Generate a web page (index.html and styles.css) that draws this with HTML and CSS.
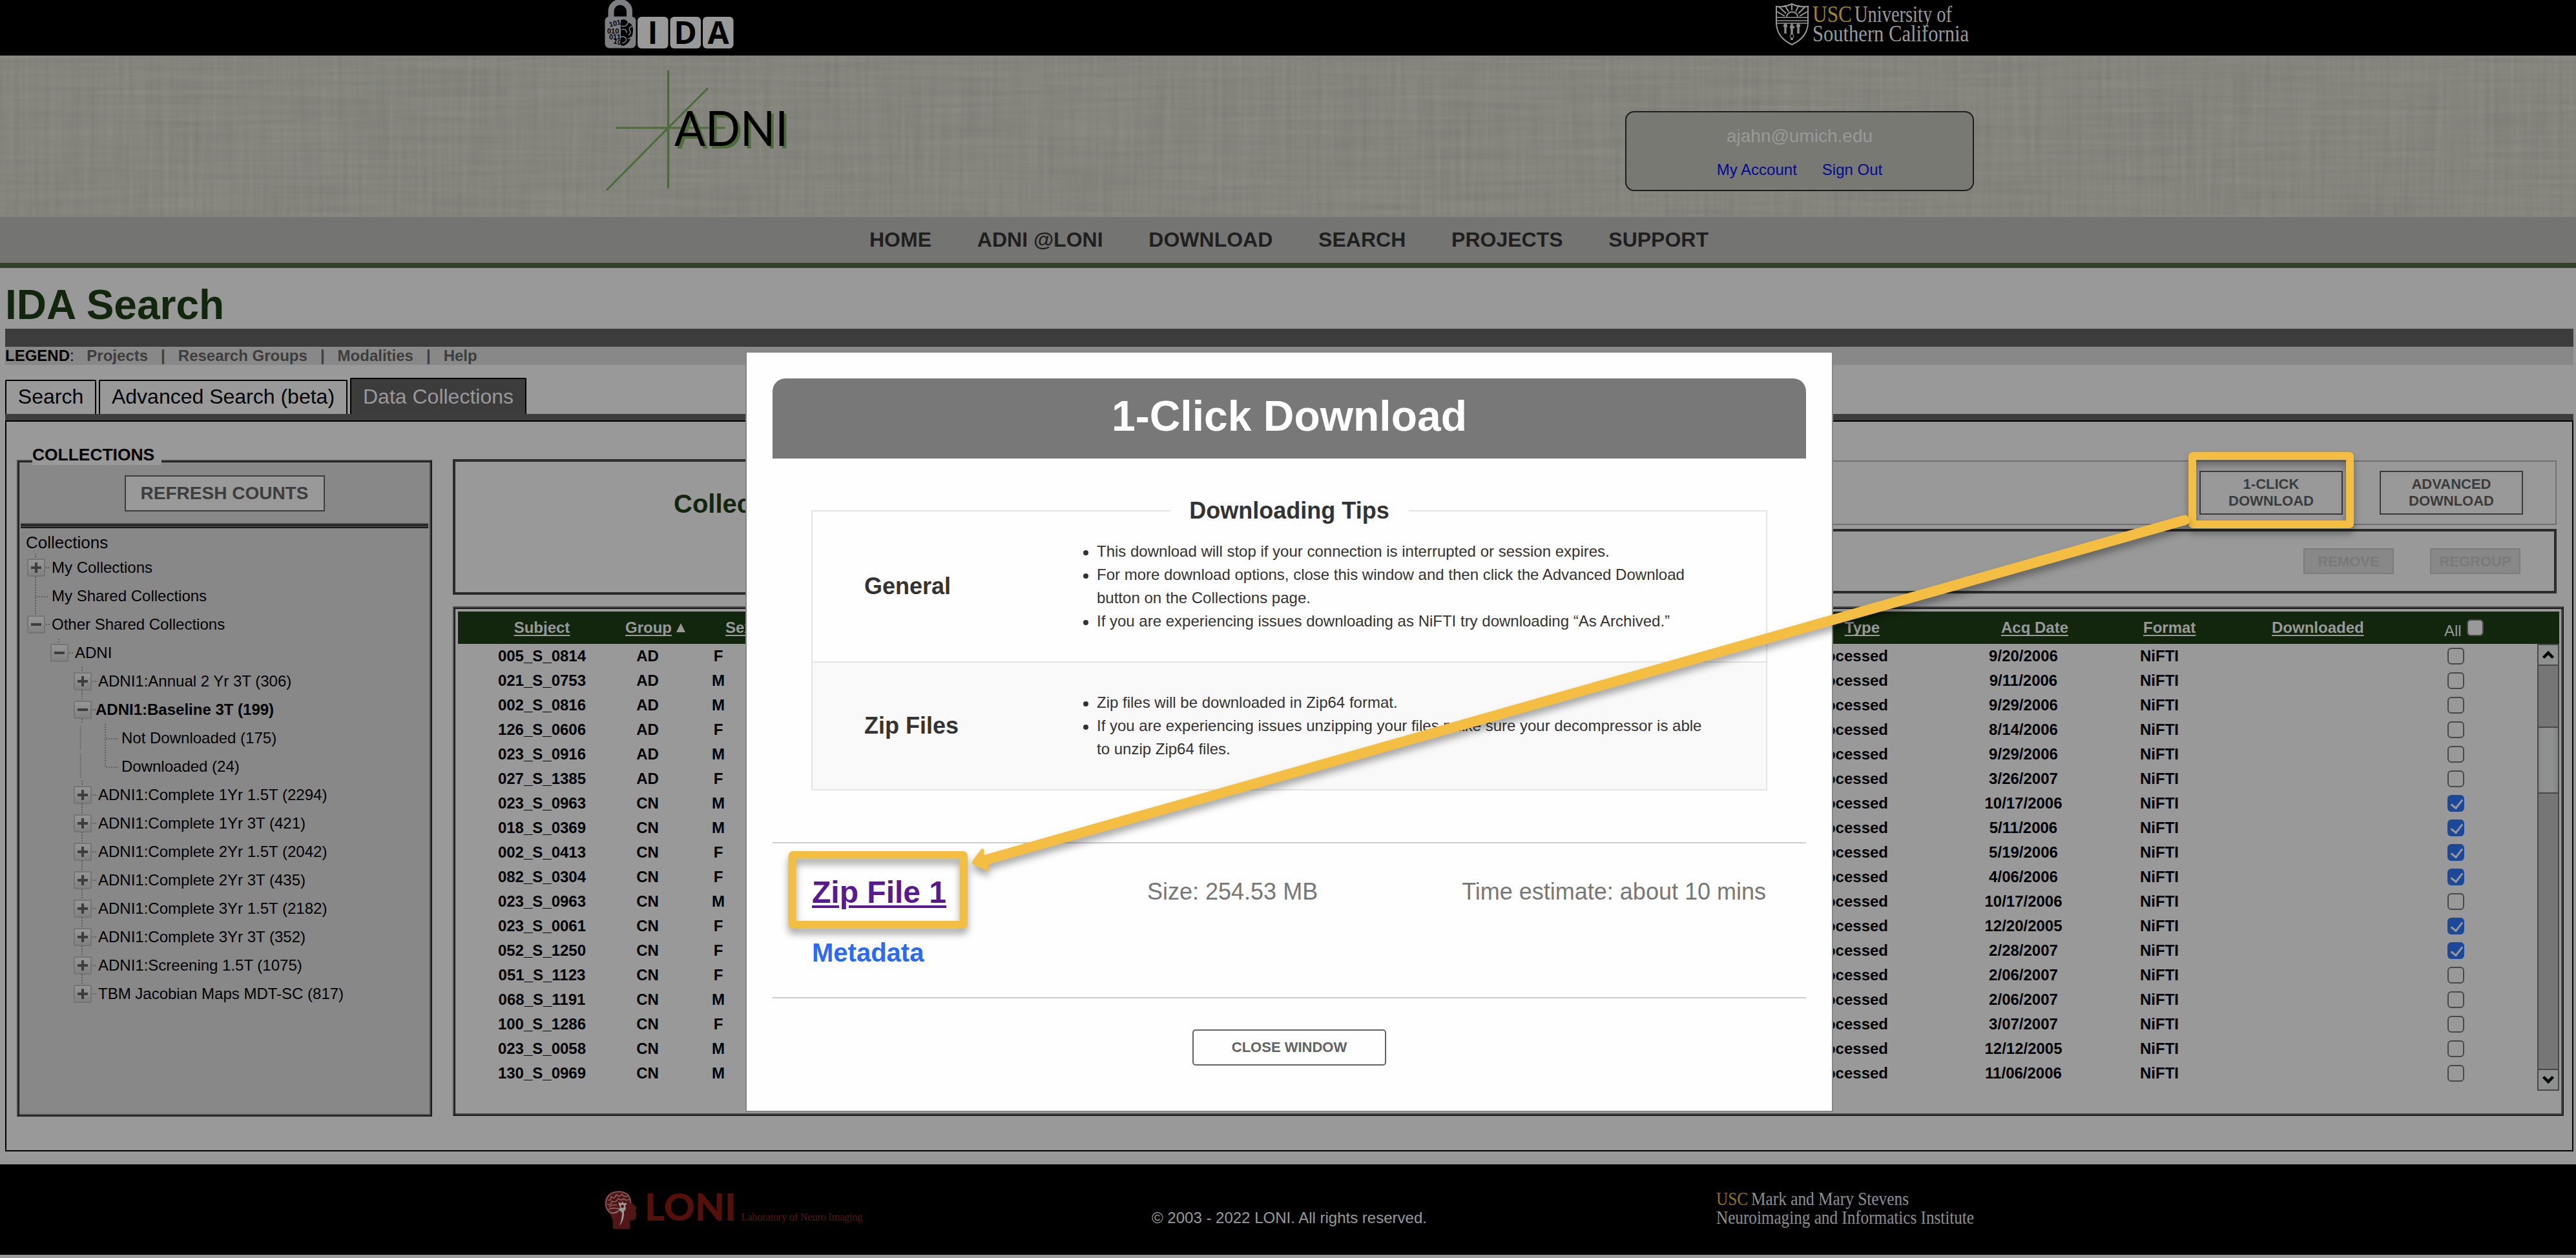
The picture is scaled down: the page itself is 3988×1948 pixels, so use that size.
FILE: index.html
```html
<!DOCTYPE html>
<html lang="en">
<head>
<meta charset="utf-8">
<title>IDA Search</title>
<link rel="stylesheet" href="styles.css">
</head>
<body>
<svg class="defs" width="0" height="0">
  <defs>
    <linearGradient id="nodeFill" x1="0" y1="0" x2="0" y2="1"><stop offset="0" stop-color="#979797"/><stop offset="1" stop-color="#808080"/></linearGradient>
    <filter id="warp" x="0" y="0" width="100%" height="100%" color-interpolation-filters="sRGB">
      <feTurbulence type="fractalNoise" baseFrequency="0.13 0.005" numOctaves="2" seed="4"/>
      <feColorMatrix values="0 0 0 0 0  0 0 0 0 0  0 0 0 0 0  .09 0 0 0 -.02"/>
    </filter>
    <filter id="weft" x="0" y="0" width="100%" height="100%" color-interpolation-filters="sRGB">
      <feTurbulence type="fractalNoise" baseFrequency="0.005 0.13" numOctaves="2" seed="9"/>
      <feColorMatrix values="0 0 0 0 0  0 0 0 0 0  0 0 0 0 0  .09 0 0 0 -.02"/>
    </filter>
    <symbol id="box" viewBox="0 0 42 44">
      <path d="M33 22h6" stroke="#5f5f5f" stroke-width="2" stroke-dasharray="2 2"/>
      <rect x="5" y="9" width="26" height="26" rx="2" fill="url(#nodeFill)" stroke="#747474" stroke-width="2"/>
    </symbol>
    <symbol id="up" viewBox="0 0 42 44"><path d="M17 0v9" stroke="#5f5f5f" stroke-width="2" stroke-dasharray="2 2"/></symbol>
    <symbol id="down" viewBox="0 0 42 44"><path d="M17 36v8" stroke="#5f5f5f" stroke-width="2" stroke-dasharray="2 2"/></symbol>
    <symbol id="plus" viewBox="0 0 42 44"><use href="#box"/><path d="M10 22h16M18 14v16" stroke="#3d3d3d" stroke-width="4"/></symbol>
    <symbol id="minus" viewBox="0 0 42 44"><use href="#box"/><path d="M10 22h16" stroke="#3d3d3d" stroke-width="4"/></symbol>
    <symbol id="line" viewBox="0 0 42 44"><path d="M17 0v44" stroke="#5f5f5f" stroke-width="2" stroke-dasharray="2 2"/></symbol>
    <symbol id="tee" viewBox="0 0 42 44"><use href="#line"/><path d="M18 23h20" stroke="#5f5f5f" stroke-width="2" stroke-dasharray="2 2"/></symbol>
    <symbol id="ell" viewBox="0 0 42 44"><path d="M17 0v23h21" fill="none" stroke="#5f5f5f" stroke-width="2" stroke-dasharray="2 2"/></symbol>
  </defs>
</svg>

<header class="top">
  <svg class="ida" width="202" height="78" viewBox="936 0 202 78">
    <path d="M946 28V18a14 14 0 0 1 28.500-1v8" fill="none" stroke="#7d7f83" stroke-width="9" stroke-linecap="butt"/>
    <circle cx="974.500" cy="24" r="4.500" fill="#7d7f83"/>
    <rect x="936.500" y="25.500" width="48" height="49" rx="7" fill="#7d7f83"/>
    <g font-family="Liberation Sans" font-weight="bold" font-size="11" fill="#000">
      <text x="944" y="42" transform="rotate(-14 944 42)">101</text>
      <text x="940" y="52">010</text>
      <text x="943" y="61">011</text>
      <text x="949" y="67" transform="rotate(14 949 67)">10</text>
    </g>
    <path d="M961 31c5-2 10 0 11 4 6 1 8 6 8 11s-1 10-4 13c-1 6-6 10-11 12-3 0-5-2-4-5z" fill="#000"/>
    <path d="M962 40c4 2 9 0 10-5M962 46c5-2 8 0 8 5M979 41c-4 0-6 3-4 6s1 6-2 7M961 57c5-1 10 1 8 6-1 3-4 4-6 3M972 60c3 0 4-1 5-3" fill="none" stroke="#7d7f83" stroke-width="1.500"/>
    <rect x="987" y="26" width="47.500" height="49" rx="6" fill="#999"/>
    <rect x="1037.500" y="26" width="47.500" height="49" rx="6" fill="#999"/>
    <rect x="1088" y="26" width="47.500" height="49" rx="6" fill="#999"/>
    <g font-family="Open Sans" font-weight="bold" font-size="48" fill="#000" text-anchor="middle">
      <text x="1010.500" y="68">I</text><text x="1061" y="68">D</text><text x="1112" y="68">A</text>
    </g>
  </svg>
  <svg class="usc" width="302" height="76" viewBox="2748 0 302 76">
    <path d="M2750 10q12 2 24-4q12 6 25 4v24q0 24-25 35q-24-11-24-35z" fill="#000" stroke="#969696" stroke-width="2"/>
    <path d="M2750 27h48M2750 32h48M2750 36h49" stroke="#969696" stroke-width="1.500"/>
    <path d="M2766 26a8 7 0 0 1 17 0M2763 25l-12-7M2765 21l-11-11M2769 18l-6-10M2774 16v-9M2780 18l5-10M2784 21l11-11M2786 25l12-7" fill="none" stroke="#969696" stroke-width="2"/>
    <path d="M2764 36v16M2774 36v26M2784 36v16M2761 40h6M2771 42h7M2781 40h6" stroke="#8a8a8a" stroke-width="3.500"/>
    <circle cx="2774" cy="56" r="3" fill="#000" stroke="#969696"/>
    <g font-family="Liberation Serif" font-size="35" fill="#999">
      <text x="2806" y="33.500" fill="#9c8430" textLength="61" lengthAdjust="spacingAndGlyphs">USC</text>
      <text x="2871" y="33.500" textLength="151" lengthAdjust="spacingAndGlyphs">University of</text>
      <text x="2806" y="64" textLength="242" lengthAdjust="spacingAndGlyphs">Southern California</text>
    </g>
  </svg>
</header>

<section class="banner">
  <svg class="weave" width="3988" height="250"><rect width="3988" height="250" filter="url(#warp)"/><rect width="3988" height="250" filter="url(#weft)"/></svg>
  <svg class="adni" width="300" height="200" viewBox="930 102 300 200">
    <path d="M1034.500 109v183" fill="none" stroke="#4a6d38" stroke-width="3.500"/>
    <path d="M953 198h170M939 294.500L1034.500 198L1096 136.500" fill="none" stroke="#4a6d38" stroke-width="3"/>
    <g font-family="Lato" font-size="76">
      <text x="1048" y="229.500" fill="#4d6d3c" textLength="176" lengthAdjust="spacingAndGlyphs">ADNI</text>
      <text x="1044" y="225.500" fill="#000" textLength="176" lengthAdjust="spacingAndGlyphs">ADNI</text>
    </g>
  </svg>
  <div class="account">
    <div class="email">ajahn@umich.edu</div>
    <div class="account-links"><a>My Account</a><a>Sign Out</a></div>
  </div>
</section>

<nav class="nav"><a>HOME</a><a>ADNI @LONI</a><a>DOWNLOAD</a><a>SEARCH</a><a>PROJECTS</a><a>SUPPORT</a></nav>

<main class="main">
  <h1>IDA Search</h1>
  <div class="bar"></div>
  <div class="legend"><b>LEGEND</b>: <span class="lg first">Projects</span><span class="lg">|</span><span class="lg">Research Groups</span><span class="lg">|</span><span class="lg">Modalities</span><span class="lg">|</span><span class="lg">Help</span></div>
  <div class="tabs"><div class="tab t1">Search</div><div class="tab t2">Advanced Search (beta)</div><div class="tab t3 active">Data Collections</div></div>
  <div class="tabbar"></div>
  <div class="panel">
    <aside class="collections">
      <div class="coll-label">COLLECTIONS</div>
      <div class="refresh">REFRESH COUNTS</div>
      <div class="rule"></div>
      <div class="tree">
        <div class="root">Collections</div>
        <div class="node l1"><svg><use href="#up"/><use href="#plus"/><use href="#down"/></svg>My Collections</div>
        <div class="node l1"><svg><use href="#tee"/></svg>My Shared Collections</div>
        <div class="node l1"><svg><use href="#up"/><use href="#minus"/></svg>Other Shared Collections</div>
        <div class="node l2"><svg><use href="#up"/><use href="#minus"/></svg>ADNI</div>
        <div class="node l3"><svg><use href="#up"/><use href="#plus"/><use href="#down"/></svg>ADNI1:Annual 2 Yr 3T (306)</div>
        <div class="node l3 sel"><svg><use href="#up"/><use href="#minus"/><use href="#down"/></svg>ADNI1:Baseline 3T (199)</div>
        <div class="node l3"><svg class="thru"><use href="#line"/></svg><svg><use href="#tee"/></svg>Not Downloaded (175)</div>
        <div class="node l3"><svg class="thru"><use href="#line"/></svg><svg><use href="#ell"/></svg>Downloaded (24)</div>
        <div class="node l3"><svg><use href="#up"/><use href="#plus"/><use href="#down"/></svg>ADNI1:Complete 1Yr 1.5T (2294)</div>
        <div class="node l3"><svg><use href="#up"/><use href="#plus"/><use href="#down"/></svg>ADNI1:Complete 1Yr 3T (421)</div>
        <div class="node l3"><svg><use href="#up"/><use href="#plus"/><use href="#down"/></svg>ADNI1:Complete 2Yr 1.5T (2042)</div>
        <div class="node l3"><svg><use href="#up"/><use href="#plus"/><use href="#down"/></svg>ADNI1:Complete 2Yr 3T (435)</div>
        <div class="node l3"><svg><use href="#up"/><use href="#plus"/><use href="#down"/></svg>ADNI1:Complete 3Yr 1.5T (2182)</div>
        <div class="node l3"><svg><use href="#up"/><use href="#plus"/><use href="#down"/></svg>ADNI1:Complete 3Yr 3T (352)</div>
        <div class="node l3"><svg><use href="#up"/><use href="#plus"/><use href="#down"/></svg>ADNI1:Screening 1.5T (1075)</div>
        <div class="node l3"><svg><use href="#up"/><use href="#plus"/></svg>TBM Jacobian Maps MDT-SC (817)</div>
      </div>
    </aside>
    <section class="content">
      <div class="heads">
        <div class="title-box"><h2>Collection</h2></div>
        <div class="tools">
          <div class="downloads"><div class="btn">1-CLICK<br>DOWNLOAD</div><div class="btn">ADVANCED<br>DOWNLOAD</div></div>
          <div class="groups"><div class="btn off">REMOVE</div><div class="btn off">REGROUP</div></div>
        </div>
      </div>
      <div class="results">
        <div class="row hd"><u>Subject</u><div class="group-hd"><u>Group</u><svg width="14" height="14" viewBox="0 0 14 14"><path d="M7 0l7 14H0z" fill="#999"/></svg></div><u>Sex</u><u>Type</u><u>Acq Date</u><u>Format</u><u>Downloaded</u><div class="all"><span>All</span><i class="cb fill"></i></div></div>
        <div class="body">
          <div class="rows">
            <div class="row"><b>005_S_0814</b><b>AD</b><b>F</b><b>Processed</b><b>9/20/2006</b><b>NiFTI</b><b></b><i class="cb"></i></div>
            <div class="row"><b>021_S_0753</b><b>AD</b><b>M</b><b>Processed</b><b>9/11/2006</b><b>NiFTI</b><b></b><i class="cb"></i></div>
            <div class="row"><b>002_S_0816</b><b>AD</b><b>M</b><b>Processed</b><b>9/29/2006</b><b>NiFTI</b><b></b><i class="cb"></i></div>
            <div class="row"><b>126_S_0606</b><b>AD</b><b>F</b><b>Processed</b><b>8/14/2006</b><b>NiFTI</b><b></b><i class="cb"></i></div>
            <div class="row"><b>023_S_0916</b><b>AD</b><b>M</b><b>Processed</b><b>9/29/2006</b><b>NiFTI</b><b></b><i class="cb"></i></div>
            <div class="row"><b>027_S_1385</b><b>AD</b><b>F</b><b>Processed</b><b>3/26/2007</b><b>NiFTI</b><b></b><i class="cb"></i></div>
            <div class="row"><b>023_S_0963</b><b>CN</b><b>M</b><b>Processed</b><b>10/17/2006</b><b>NiFTI</b><b></b><i class="cb on"></i></div>
            <div class="row"><b>018_S_0369</b><b>CN</b><b>M</b><b>Processed</b><b>5/11/2006</b><b>NiFTI</b><b></b><i class="cb on"></i></div>
            <div class="row"><b>002_S_0413</b><b>CN</b><b>F</b><b>Processed</b><b>5/19/2006</b><b>NiFTI</b><b></b><i class="cb on"></i></div>
            <div class="row"><b>082_S_0304</b><b>CN</b><b>F</b><b>Processed</b><b>4/06/2006</b><b>NiFTI</b><b></b><i class="cb on"></i></div>
            <div class="row"><b>023_S_0963</b><b>CN</b><b>M</b><b>Processed</b><b>10/17/2006</b><b>NiFTI</b><b></b><i class="cb"></i></div>
            <div class="row"><b>023_S_0061</b><b>CN</b><b>F</b><b>Processed</b><b>12/20/2005</b><b>NiFTI</b><b></b><i class="cb on"></i></div>
            <div class="row"><b>052_S_1250</b><b>CN</b><b>F</b><b>Processed</b><b>2/28/2007</b><b>NiFTI</b><b></b><i class="cb on"></i></div>
            <div class="row"><b>051_S_1123</b><b>CN</b><b>F</b><b>Processed</b><b>2/06/2007</b><b>NiFTI</b><b></b><i class="cb"></i></div>
            <div class="row"><b>068_S_1191</b><b>CN</b><b>M</b><b>Processed</b><b>2/06/2007</b><b>NiFTI</b><b></b><i class="cb"></i></div>
            <div class="row"><b>100_S_1286</b><b>CN</b><b>F</b><b>Processed</b><b>3/07/2007</b><b>NiFTI</b><b></b><i class="cb"></i></div>
            <div class="row"><b>023_S_0058</b><b>CN</b><b>M</b><b>Processed</b><b>12/12/2005</b><b>NiFTI</b><b></b><i class="cb"></i></div>
            <div class="row"><b>130_S_0969</b><b>CN</b><b>M</b><b>Processed</b><b>11/06/2006</b><b>NiFTI</b><b></b><i class="cb"></i></div>
          </div>
          <div class="scroll">
            <div class="arrow"><svg width="20" height="14" viewBox="0 0 20 14"><path d="M2.500 11.500L10 4l7.500 7.500" fill="none" stroke="#000" stroke-width="4.500"/></svg></div>
            <div class="gap-top"></div>
            <div class="thumb"></div>
            <div class="gap-bottom"></div>
            <div class="arrow"><svg width="20" height="14" viewBox="0 0 20 14"><path d="M2.500 2.500L10 10l7.500-7.500" fill="none" stroke="#000" stroke-width="4.500"/></svg></div>
          </div>
        </div>
      </div>
    </section>
  </div>
</main>

<footer class="footer">
  <svg class="loni" width="404" height="64" viewBox="934 1842 404 64">
    <path d="M949 1903v-10q-1-10-9-18q-6-9-3-19q5-12 22-12q16 1 18 15l1 4l8 7l-2 3l1 8l-1 6q-2 3-9 3v13z" fill="#531616"/>
    <path d="M938 1868q-1-18 14-22q20-3 24 12v5M938 1868q3 10 12 11q8-1 9-7" fill="none" stroke="#8b7a7a" stroke-width="1.200"/>
    <path d="M941 1858q5 2 5-5q5 5 8-3q5 5 9-1q2 5 9 3M940 1865q8 1 7-5q7 3 10-4q5 4 9 0q2 4 9 1M942 1873q5-3 11-2l6 1M943 1869q3-4 12-3M945 1877q4 3 12-2" fill="none" stroke="#8b7070" stroke-width="1.300"/>
    <path d="M957 1862l5 1l2-3l1 3l6 0l-3 4l1 5l-3 4q1 13-7 22q4-10 4-20l-5-5l2-3z" fill="#999"/>
    <circle cx="963.500" cy="1868" r="2.500" fill="#531616"/>
    <text x="998" y="1890" font-family="Lato" font-weight="900" font-size="57" fill="#570f09" textLength="142" lengthAdjust="spacingAndGlyphs">LONI</text>
    <text x="1147.500" y="1890" font-family="Liberation Serif" font-size="16.500" fill="#531515" textLength="188">Laboratory of Neuro Imaging</text>
  </svg>
  <div class="copy">© 2003 - 2022 LONI. All rights reserved.</div>
  <svg class="ini" width="402" height="60" viewBox="2656 1842 402 60" font-family="Liberation Serif" font-size="30" fill="#8e8e8e">
    <text x="2657" y="1866" fill="#917418" textLength="49" lengthAdjust="spacingAndGlyphs">USC</text>
    <text x="2711" y="1866" textLength="244" lengthAdjust="spacingAndGlyphs">Mark and Mary Stevens</text>
    <text x="2657" y="1894.500" textLength="399" lengthAdjust="spacingAndGlyphs">Neuroimaging and Informatics Institute</text>
  </svg>
</footer>

<div class="modal">
  <div class="modal-title">1-Click Download</div>
  <div class="tips">
    <div class="tips-label">Downloading Tips</div>
    <div class="tip r1"><h3>General</h3><ul><li>This download will stop if your connection is interrupted or session expires.</li><li>For more download options, close this window and then click the Advanced Download button on the Collections page.</li><li>If you are experiencing issues downloading as NiFTI try downloading “As Archived.”</li></ul></div>
    <div class="tip r2"><h3>Zip Files</h3><ul><li>Zip files will be downloaded in Zip64 format.</li><li>If you are experiencing issues unzipping your files make sure your decompressor is able to unzip Zip64 files.</li></ul></div>
  </div>
  <div class="files">
    <div class="file"><a class="zip">Zip File 1</a><span>Size: 254.53 MB</span><span class="time">Time estimate: about 10 mins</span></div>
    <a class="meta">Metadata</a>
  </div>
  <div class="close">CLOSE WINDOW</div>
</div>

<svg class="notes" width="3988" height="1948" viewBox="0 0 3988 1948">
  <g fill="none" stroke="#f3be42" stroke-width="12" stroke-linejoin="round">
    <rect x="3394" y="706" width="244" height="106" rx="1"/>
    <rect x="1226.500" y="1324" width="265.500" height="108" rx="1"/>
  </g>
  <g>
    <path d="M3382 805.500L1524 1332" stroke="#f3be42" stroke-width="15.800" stroke-linecap="round"/>
    <path d="M1505 1337.500Q1504 1334 1507 1331L1519 1315Q1523 1312 1523 1317L1524 1324L1531 1338L1530.500 1345Q1531 1351 1527 1348L1508 1339.500Z" fill="#f3be42"/>
  </g>
</svg>
</body>
</html>
```
FILE: styles.css
```css
* { box-sizing: border-box; }
body { margin: 0; width: 3988px; height: 1948px; overflow: hidden; position: relative; background: #999; color: #000; font: 24px "Liberation Sans", Arial, sans-serif; }
h1, h2, h3, ul { margin: 0; padding: 0; }
svg { display: block; flex: none; overflow: visible; }
.defs { position: absolute; }

.top { height: 86px; background: #000; display: flex; padding-left: 936px; gap: 1610px; }
.banner { position: relative; height: 250px; display: flex; padding-left: 930px; gap: 1286px; background: #8b8b84; }
.weave { position: absolute; left: 0; top: 0; overflow: hidden; }
.adni { position: relative; margin-top: 16px; }
.account { position: relative; width: 540px; height: 124px; margin-top: 86px; padding-top: 19px; border: 2px solid #1e1e1e; border-radius: 14px; background: #787973; text-align: center; }
.email { font-size: 28px; line-height: 36px; color: #999; }
.account-links { display: flex; justify-content: center; gap: 39px; margin-top: 19px; line-height: 30px; color: #000999; }

.nav { height: 79px; display: flex; gap: 70.800px; padding-left: 1346px; border-bottom: 8px solid #33412a; background: #747473; color: #1f1f1f; font-size: 32px; font-weight: bold; line-height: 70px; white-space: nowrap; }

.main { margin-left: 8px; width: 3976px; }
h1 { height: 94px; padding-top: 21px; font-size: 64px; line-height: 72px; color: #11260d; }
.bar { height: 28px; background: #3c3c3c; }
.legend { height: 28px; line-height: 28px; background: #888; display: flex; white-space: pre; }
.lg { font-weight: bold; color: #3d3d3d; margin-right: 20px; }
.lg.first { margin-left: 13px; }
.tabs { height: 76px; display: flex; align-items: flex-end; gap: 4px; font-size: 32px; }
.tab { height: 53px; line-height: 48px; border: 2px solid #000; border-bottom: 0; text-align: center; border-radius: 2px 2px 0 0; }
.t1 { width: 141px; }
.t2 { width: 385px; }
.t3 { width: 273px; }
.tab.active { height: 56px; padding-top: 3px; background: #3c3c3c; color: #999; }
.tabbar { height: 10px; background: #3d3d3d; }
.panel { height: 1132px; border: 2px solid #000; padding: 58px 0 0 16px; display: flex; gap: 32px; }

.collections { width: 643px; height: 1017px; margin-top: 1px; background: #888; border: 2px solid; border-color: #4c4c4c #1c1c1c #1c1c1c #4c4c4c; box-shadow: inset 2px 2px 0 #1c1c1c, inset -2px -2px 0 #4c4c4c; padding: 0 4px; }
.coll-label { width: 200px; height: 30px; margin: -24px 0 0 18px; background: #999; font-size: 26.400px; font-weight: bold; line-height: 28px; }
.refresh { width: 310px; height: 56px; margin: 16px auto 0; border: 2px solid #3d3d3d; background: #999; color: #3d3d3d; font-size: 28px; font-weight: bold; line-height: 52px; text-align: center; }
.rule { height: 8px; margin-top: 18px; background: linear-gradient(#4c4c4c 0 2px, #1c1c1c 2px 4px, #444 4px 6px, #1c1c1c 6px 8px); }
.root { height: 33px; margin: 6px 0 0 8px; font-size: 26px; line-height: 33px; }
.node { height: 44px; line-height: 44px; display: flex; white-space: nowrap; }
.node svg { width: 42px; height: 44px; }
.node .thru { width: 36px; }
.node .thru use { width: 42px; height: 44px; }
.l1 { padding-left: 6px; }
.l2 { padding-left: 42px; }
.l3 { padding-left: 78px; }
.sel { font-weight: bold; }
.sel svg { margin-right: -4px; }

.content { width: 3268px; }
.heads { display: flex; gap: 12px; padding-right: 11px; height: 228px; }
.title-box { width: 1300px; height: 210px; border: 4px solid #2b2b2b; padding: 42px 0 0 338px; }
h2 { font-size: 40px; line-height: 46px; color: #11260d; }
.tools { flex: 1; padding-top: 2px; }
.downloads { height: 100px; border: 2px solid #707070; display: flex; justify-content: flex-end; gap: 57px; padding: 14px 50px 0 0; }
.groups { height: 100px; margin-top: 6px; border: 4px solid #2b2b2b; display: flex; justify-content: flex-end; align-items: center; gap: 56px; padding-right: 52px; }
.btn { width: 222px; height: 68px; padding-top: 6px; border: 2px solid #3b3b3b; color: #3b3b3b; font-size: 22px; font-weight: bold; line-height: 25.500px; text-align: center; }
.off { width: 140px; height: 40px; padding: 0; line-height: 37px; background: #888; border-color: #7c7c7c; color: #7a7a7a; }

.results { height: 789px; padding: 6px 5px 0 6px; border: 2px solid; border-color: #4c4c4c #1c1c1c #1c1c1c #4c4c4c; box-shadow: inset 2px 2px 0 #1c1c1c, inset -2px -2px 0 #4c4c4c; }
.row { display: grid; grid-template-columns: 260px 67px 152px 1764px 361px 204px 272px 139px; height: 38px; align-items: center; text-align: center; white-space: nowrap; }
.row > :nth-child(4) { text-align: right; padding-right: 29px; }
.row > :nth-child(6) { text-align: left; }
.hd { height: 50px; background: #11260d; color: #999; font-weight: bold; }
.hd u { text-decoration-thickness: 2px; text-underline-offset: 3px; text-decoration-skip-ink: none; }
.hd > :nth-child(3) { text-align: left; padding-left: 87px; }
.hd > :nth-child(4) { padding-right: 42px; }
.hd > :nth-child(5) { padding-left: 35px; }
.hd > :nth-child(6) { padding-left: 5px; }
.hd > :nth-child(7) { text-align: left; }
.group-hd { display: flex; align-items: center; gap: 7px; width: 96px; }
.group-hd u { margin-left: -1px; }
.all { display: flex; gap: 8px; align-items: center; margin-left: -5px; font-weight: normal; }
.all span { padding-top: 10px; }
.cb { display: block; width: 26px; height: 26px; border: 2px solid #484848; border-radius: 6px; }
.cb.fill { background: #999; }
.cb.on { border: 0; background: #1c489a; position: relative; }
.cb.on::after { content: ""; position: absolute; left: 9px; top: 3px; width: 8px; height: 15px; border: solid #999; border-width: 0 3px 3px 0; transform: rotate(38deg); }
.body { display: flex; width: 3253px; }
.rows { width: 3219px; }
.scroll { width: 34px; height: 692px; background: #767676; border: 2px solid #484848; border-width: 0 2px; display: flex; flex-direction: column; }
.arrow { height: 34px; background: #8f9190; border: 1px solid #484848; border-width: 2px 0; display: flex; align-items: center; justify-content: center; }
.gap-top { height: 94px; }
.thumb { height: 104px; border: solid #484848; border-width: 2px 0; background: linear-gradient(90deg, #888, #8f9190 30%, #8f9190 70%, #848484); }
.gap-bottom { flex: 1; }

.footer { height: 140px; margin-top: 20px; background: #000; display: flex; padding-left: 934px; }
.loni { margin-top: 39px; }
.copy { margin: 68px 0 0 445px; width: 428px; line-height: 30px; color: #999; white-space: nowrap; }
.ini { margin: 39px 0 0 445px; }

.modal { position: absolute; left: 1156px; top: 546px; width: 1680px; height: 1174px; padding: 40px; background: #fefefe; box-shadow: 0 0 0 2px #858585; color: #333; }
.modal-title { height: 124px; border-radius: 20px 20px 0 0; background: #787878; color: #fff; font-size: 66px; font-weight: bold; line-height: 116px; text-align: center; }
.tips { height: 434px; margin: 80px 60px 0; border: 2px solid #e4e4e4; }
.tips-label { width: 369px; height: 40px; margin: -22px auto 0; background: #fefefe; font-size: 36px; font-weight: bold; line-height: 41px; text-align: center; }
.tip { display: flex; align-items: center; padding-left: 80px; }
.r1 { height: 232px; margin-top: -18px; }
.r2 { height: 198px; border-top: 2px solid #e4e4e4; background: #f9f9f9; }
h3 { width: 360px; font-size: 36px; }
ul { width: 944px; list-style: none; line-height: 36px; }
li { position: relative; }
li::before { content: ""; position: absolute; left: -21px; top: 16px; width: 8px; height: 8px; border-radius: 50%; background: #333; }
.files { height: 242px; margin-top: 80px; padding: 45px 62px 0 61px; border: solid #ccc; border-width: 2px 0; }
.file { display: grid; grid-template-columns: 519px 1fr auto; align-items: center; height: 60px; font-size: 36px; color: #777; }
.zip { font-size: 48px; font-weight: bold; color: #5b1893; text-decoration: underline; text-decoration-thickness: 4px; text-underline-offset: 4px; }
.meta { display: block; margin-top: 39px; font-size: 40px; font-weight: bold; line-height: 50px; color: #286aff; }
.close { width: 300px; height: 56px; margin: 48px auto 0; border: 2px solid #636363; border-radius: 5px; color: #636363; font-size: 22px; font-weight: bold; line-height: 52px; text-align: center; }

.notes { position: absolute; left: 0; top: 0; pointer-events: none; }
.notes g { filter: drop-shadow(0 8px 6px rgba(0, 0, 0, .35)); }
```
